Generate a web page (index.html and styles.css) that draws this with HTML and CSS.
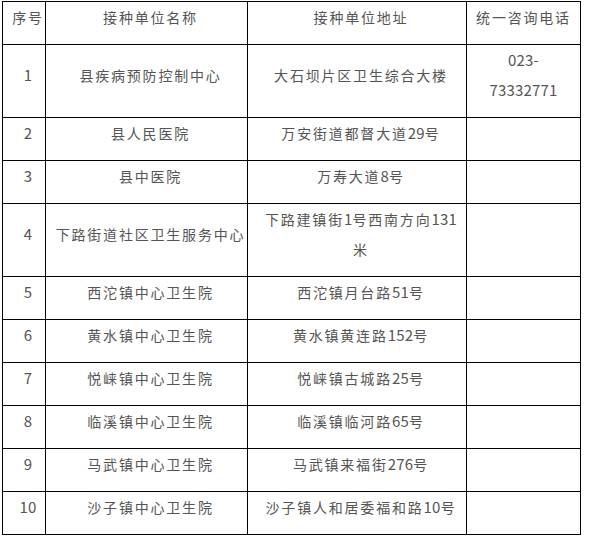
FILE: index.html
```html
<!DOCTYPE html>
<html lang="zh-CN">
<head>
<meta charset="utf-8">
<title>接种单位</title>
<link rel="stylesheet" href="styles.css">
</head>
<body>
<table class="grid">
  <colgroup>
    <col class="c1"><col class="c2"><col class="c3"><col class="c4">
  </colgroup>
  <thead>
    <tr>
      <th class="no">序号</th>
      <th class="name">接种单位名称</th>
      <th class="addr">接种单位地址</th>
      <th class="tel">统一咨询电话</th>
    </tr>
  </thead>
  <tbody>
    <tr>
      <td class="no"><span class="n">1</span></td>
      <td class="name">县疾病预防控制中心</td>
      <td class="addr">大石坝片区卫生综合大楼</td>
      <td class="tel"><span class="n">023-</span><br><span class="n">73332771</span></td>
    </tr>
    <tr>
      <td class="no"><span class="n">2</span></td>
      <td class="name">县人民医院</td>
      <td class="addr">万安街道都督大道<span class="n">29</span>号</td>
      <td class="tel"></td>
    </tr>
    <tr>
      <td class="no"><span class="n">3</span></td>
      <td class="name">县中医院</td>
      <td class="addr">万寿大道<span class="n">8</span>号</td>
      <td class="tel"></td>
    </tr>
    <tr>
      <td class="no"><span class="n">4</span></td>
      <td class="name">下路街道社区卫生服务中心</td>
      <td class="addr">下路建镇街<span class="n">1</span>号西南方向<span class="n">131</span>米</td>
      <td class="tel"></td>
    </tr>
    <tr>
      <td class="no"><span class="n">5</span></td>
      <td class="name">西沱镇中心卫生院</td>
      <td class="addr">西沱镇月台路<span class="n">51</span>号</td>
      <td class="tel"></td>
    </tr>
    <tr>
      <td class="no"><span class="n">6</span></td>
      <td class="name">黄水镇中心卫生院</td>
      <td class="addr">黄水镇黄连路<span class="n">152</span>号</td>
      <td class="tel"></td>
    </tr>
    <tr>
      <td class="no"><span class="n">7</span></td>
      <td class="name">悦崃镇中心卫生院</td>
      <td class="addr">悦崃镇古城路<span class="n">25</span>号</td>
      <td class="tel"></td>
    </tr>
    <tr>
      <td class="no"><span class="n">8</span></td>
      <td class="name">临溪镇中心卫生院</td>
      <td class="addr">临溪镇临河路<span class="n">65</span>号</td>
      <td class="tel"></td>
    </tr>
    <tr>
      <td class="no"><span class="n">9</span></td>
      <td class="name">马武镇中心卫生院</td>
      <td class="addr">马武镇来福街<span class="n">276</span>号</td>
      <td class="tel"></td>
    </tr>
    <tr>
      <td class="no"><span class="n">10</span></td>
      <td class="name">沙子镇中心卫生院</td>
      <td class="addr">沙子镇人和居委福和路<span class="n">10</span>号</td>
      <td class="tel"></td>
    </tr>
  </tbody>
</table>
</body>
</html>
```

FILE: styles.css
```css
html, body {
  margin: 0;
  padding: 0;
  background: #ffffff;
}

.grid {
  margin: 1px 0 0 2px;
  width: 578px;
  table-layout: fixed;
  border-collapse: collapse;
  font-family: "Noto Sans CJK SC", "Noto Sans", sans-serif;
  font-size: 14px;
  letter-spacing: 1.8px;
  line-height: 30px;
  color: #555555;
}

.c1 { width: 43px; }
.c2 { width: 202px; }
.c3 { width: 219px; }
.c4 { width: 114px; }

.grid th,
.grid td {
  border: 1px solid #000000;
  font-weight: normal;
  text-align: center;
  vertical-align: middle;
  padding: 0 0 12px 0;
}

.grid .no { padding-left: 8px; white-space: nowrap; }
.grid .name { padding-left: 8px; white-space: nowrap; }
.grid .addr { padding-left: 12px; padding-right: 4px; }
.grid .tel { padding-left: 0; padding-right: 0; }

.n {
  font-size: 15px;
  letter-spacing: 0.2px;
  line-height: 20px;
}
```
